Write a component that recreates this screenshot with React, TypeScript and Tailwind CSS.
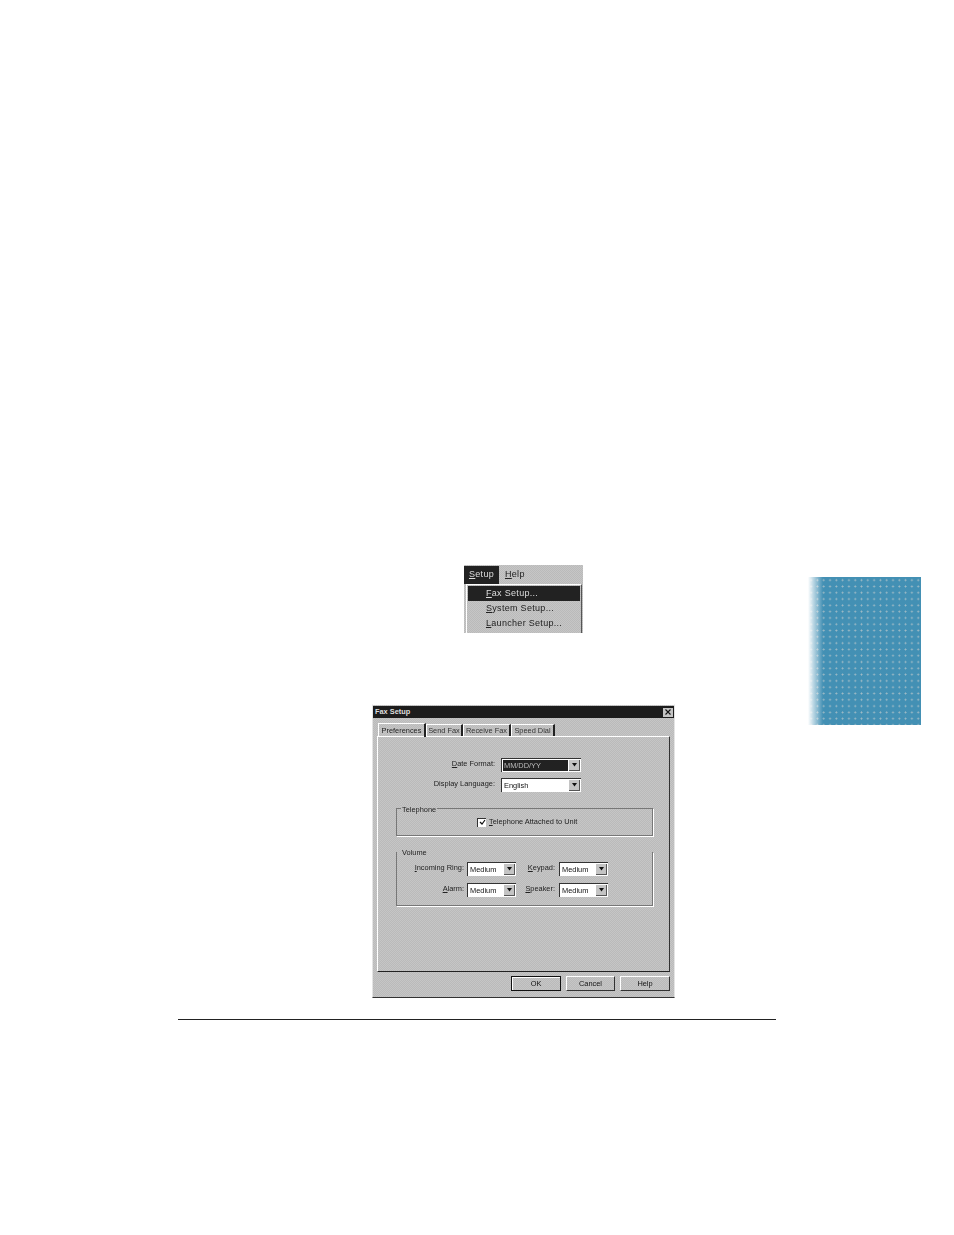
import type { ReactNode } from 'react';

const dither = 'bg-[repeating-conic-gradient(#bababa_0_25%,#c6c6c6_0_50%)] bg-[length:2px_2px]';

function Arrow() {
  return (
    <span className="flex w-[11px] h-[11px] items-center justify-center bg-[#c4c4c4] border-r border-b border-[#555] border-t-white border-l-white">
      <svg width="7" height="4" viewBox="0 0 7 4">
        <path d="M1 0h5L3.5 3.5z" fill="#111" />
      </svg>
    </span>
  );
}

function Select({ value, width, selected }: { value: string; width: string; selected?: boolean }) {
  return (
    <div className={`${width} h-[14px] flex items-center justify-between bg-white border-l border-t border-[#333] pr-px`}>
      <span className={selected ? 'flex-1 h-[11px] ml-px mr-px bg-[#222] text-[#bbb] pl-px leading-[11px]' : 'pl-[2px] text-[#111]'}>{value}</span>
      <Arrow />
    </div>
  );
}

function Label({ first, rest, className }: { first: string; rest: string; className: string }) {
  return (
    <span className={`${className} -mt-[2px] text-right text-[#222]`}>
      <u>{first}</u>
      {rest}
    </span>
  );
}

function Tab({ children, width }: { children: ReactNode; width: string }) {
  return (
    <div className={`${width} h-[12px] flex items-center justify-center border-t border-l border-white border-r-2 border-r-[#222] text-[#333]`}>
      {children}
    </div>
  );
}

function DialogButton({ children, primary, width }: { children: ReactNode; primary?: boolean; width: string }) {
  return (
    <div
      className={
        primary
          ? `${width} h-[15px] flex items-center justify-center border border-[#111] shadow-[inset_1px_1px_0_#fff] text-[#111]`
          : `${width} h-[15px] flex items-center justify-center border-t border-l border-white border-r border-b border-r-[#333] border-b-[#333] text-[#111]`
      }
    >
      {children}
    </div>
  );
}

function Menu() {
  return (
    <div className={`w-[119px] h-[68px] ml-[464px] text-[9px] tracking-[0.3px] blur-[0.3px] ${dither}`}>
      <div className="h-[19px] flex items-center">
        <span className="w-[35px] h-[18px] flex items-center justify-center bg-[#222] text-[#ddd]">
          <span><u>S</u>etup</span>
        </span>
        <span className="ml-[6px] text-[#222]"><u>H</u>elp</span>
      </div>
      <div className="ml-[2px] w-[116px] h-[49px] border-l border-t border-white border-r border-r-[#555] pt-px pl-px pr-px">
        <div className="h-[15px] flex items-center bg-[#222] text-[#ddd] pl-[18px]">
          <span><u>F</u>ax Setup...</span>
        </div>
        <div className="h-[15px] flex items-center pl-[18px] text-[#222]">
          <span><u>S</u>ystem Setup...</span>
        </div>
        <div className="h-[15px] flex items-center pl-[18px] text-[#222]">
          <span><u>L</u>auncher Setup...</span>
        </div>
      </div>
    </div>
  );
}

function FaxSetup() {
  return (
    <div className={`w-[303px] h-[294px] ml-[372px] mt-[71px] text-[7.4px] flex flex-col border-b border-b-[#333] border-x border-x-[#e4e4e4] border-t border-t-white pt-px blur-[0.3px] ${dither}`}>
      <div className="h-[12px] flex items-center justify-between bg-[#1c1c1c] text-[#ddd] font-bold pl-[2px] pr-px">
        <span>Fax Setup</span>
        <span className="w-[10px] h-[9px] flex items-center justify-center bg-[#c4c4c4]">
          <svg width="6" height="6" viewBox="0 0 6 6">
            <path d="M0.5 0.5l5 5M5.5 0.5l-5 5" stroke="#111" strokeWidth="1.1" />
          </svg>
        </span>
      </div>

      <div className="ml-[5px] mt-[5px] flex items-end h-[13px]">
        <div className="w-[48px] h-[14px] -mb-px relative flex items-center justify-center border-t border-l border-white border-r-2 border-r-[#222] text-[#222]">
          Preferences
        </div>
        <Tab width="w-[37px]">Send Fax</Tab>
        <Tab width="w-[48px]">Receive Fax</Tab>
        <Tab width="w-[44px]">Speed Dial</Tab>
      </div>

      <div className="ml-[4px] w-[293px] h-[236px] border-t border-l border-white border-r border-b border-r-[#333] border-b-[#222] pt-[21px]">
        <div className="flex items-center">
          <Label first="D" rest="ate Format:" className="w-[117px]" />
          <div className="ml-[6px]">
            <Select value="MM/DD/YY" width="w-[80px]" selected />
          </div>
        </div>
        <div className="flex items-center mt-[6px]">
          <Label first="" rest="Display Language:" className="w-[117px]" />
          <div className="ml-[6px]">
            <Select value="English" width="w-[80px]" />
          </div>
        </div>

        <div className="relative ml-[18px] mt-[16px] w-[257px] h-[28px] border border-[#777] shadow-[1px_1px_0_#fff] flex items-center pl-[80px]">
          <span className={`absolute -top-[5px] left-[4px] px-px text-[#222] ${dither}`}>Telephone</span>
          <span className="w-[9px] h-[9px] flex items-center justify-center bg-white border-l border-t border-[#333]">
            <svg width="7" height="7" viewBox="0 0 7 7">
              <path d="M1 3l2 2 3-4" fill="none" stroke="#111" strokeWidth="1.2" />
            </svg>
          </span>
          <span className="ml-[3px] text-[#222]"><u>T</u>elephone Attached to Unit</span>
        </div>

        <div className="relative ml-[18px] mt-[16px] w-[257px] h-[54px] border-x border-b border-[#777] shadow-[1px_1px_0_#fff] pt-[10px]">
          <span className="absolute -top-[5px] left-[4px] px-px text-[#222]">Volume</span>
          <div className="flex items-center">
            <Label first="I" rest="ncoming Ring:" className="w-[67px]" />
            <div className="ml-[3px]">
              <Select value="Medium" width="w-[49px]" />
            </div>
            <Label first="K" rest="eypad:" className="w-[39px]" />
            <div className="ml-[4px]">
              <Select value="Medium" width="w-[49px]" />
            </div>
          </div>
          <div className="flex items-center mt-[7px]">
            <Label first="A" rest="larm:" className="w-[67px]" />
            <div className="ml-[3px]">
              <Select value="Medium" width="w-[49px]" />
            </div>
            <Label first="S" rest="peaker:" className="w-[39px]" />
            <div className="ml-[4px]">
              <Select value="Medium" width="w-[49px]" />
            </div>
          </div>
        </div>
      </div>

      <div className="mt-[4px] ml-[138px] flex gap-[5px]">
        <DialogButton primary width="w-[50px]">OK</DialogButton>
        <DialogButton width="w-[49px]">Cancel</DialogButton>
        <DialogButton width="w-[50px]">Help</DialogButton>
      </div>
    </div>
  );
}

export default function App() {
  return (
    <div className="w-[954px] h-[1235px] bg-white font-['Liberation_Sans',sans-serif] flex pt-[565px] overflow-hidden">
      <div className="w-[808px] shrink-0 flex flex-col">
        <Menu />
        <FaxSetup />
        <div className="ml-[178px] mt-[21px] w-[598px] h-px bg-[#222]" />
      </div>
      <div className="mt-[12px] w-[113px] h-[148px] bg-[#4390b4] bg-[radial-gradient(circle,#a3bcc6_0.7px,transparent_1.2px)] bg-[length:6.3px_6.3px]">
        <div className="w-[15px] h-full bg-gradient-to-r from-white via-white/50 to-transparent" />
      </div>
    </div>
  );
}
